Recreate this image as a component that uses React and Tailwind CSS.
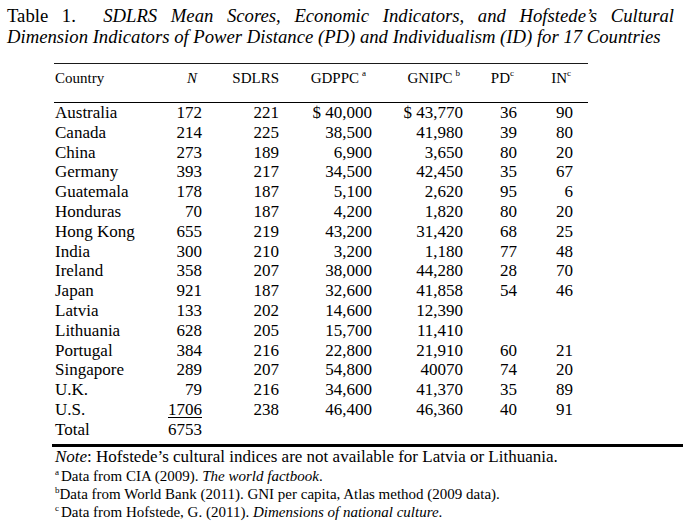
import React from "react";

const rows = [
  ["Australia", "172", "221", "$ 40,000", "$ 43,770", "36", "90"],
  ["Canada", "214", "225", "38,500", "41,980", "39", "80"],
  ["China", "273", "189", "6,900", "3,650", "80", "20"],
  ["Germany", "393", "217", "34,500", "42,450", "35", "67"],
  ["Guatemala", "178", "187", "5,100", "2,620", "95", "6"],
  ["Honduras", "70", "187", "4,200", "1,820", "80", "20"],
  ["Hong Kong", "655", "219", "43,200", "31,420", "68", "25"],
  ["India", "300", "210", "3,200", "1,180", "77", "48"],
  ["Ireland", "358", "207", "38,000", "44,280", "28", "70"],
  ["Japan", "921", "187", "32,600", "41,858", "54", "46"],
  ["Latvia", "133", "202", "14,600", "12,390", "", ""],
  ["Lithuania", "628", "205", "15,700", "11,410", "", ""],
  ["Portugal", "384", "216", "22,800", "21,910", "60", "21"],
  ["Singapore", "289", "207", "54,800", "40070", "74", "20"],
  ["U.K.", "79", "216", "34,600", "41,370", "35", "89"],
  ["U.S.", "1706", "238", "46,400", "46,360", "40", "91"],
  ["Total", "6753", "", "", "", "", ""],
];

const grid = "grid grid-cols-[95px_52px_77px_93px_91px_54px_56px]";

export default function App() {
  return (
    <div className="w-[683px] h-[523px] bg-white text-black overflow-hidden font-['Liberation_Serif','Times_New_Roman',serif]">
      <div className="pl-[7px] pr-[9px] pt-[5px] text-[18.7px] leading-[21px]">
        <div className="text-justify [text-align-last:justify] whitespace-nowrap">
          Table 1.&nbsp;{" "}
          <i>SDLRS Mean Scores, Economic Indicators, and Hofstede’s Cultural</i>
        </div>
        <div className="whitespace-nowrap">
          <i>Dimension Indicators of Power Distance (PD) and Individualism (ID) for 17 Countries</i>
        </div>
      </div>

      <div className="ml-[54px] w-[534px]">
        <div className="h-[17px] border-b border-solid border-[#1a1a1a]" />
        <div className={`${grid} h-[26px] leading-[26px] text-[15px] pl-[1px] mt-[1px]`}>
          <div>Country</div>
          <div className="text-right pr-[5px] italic">N</div>
          <div className="text-right">SDLRS</div>
          <div className="text-right pr-[6px]">
            GDPPC<sup className="text-[9px] ml-[3px] -top-[7px]">a</sup>
          </div>
          <div className="text-right pr-[3px]">
            GNIPC<sup className="text-[9px] ml-[3px] -top-[7px]">b</sup>
          </div>
          <div className="text-right pr-[3px]">
            PD<sup className="text-[9px] -top-[7px]">c</sup>
          </div>
          <div className="text-right pr-[2px]">
            IN<sup className="text-[9px] -top-[7px]">c</sup>
          </div>
        </div>
        <div className="h-[11px]" />
        <div className="h-[1px] w-[534px] bg-black" />
        <div className="text-[17px] pl-[1px]">
          {rows.map((r) => (
            <div key={r[0]} className={`${grid} h-[19.8px] leading-[19.8px]`}>
              <div className="whitespace-nowrap">{r[0]}</div>
              <div className="text-right">
                {r[0] === "U.S." ? (
                  <span className="underline underline-offset-[2px]">{r[1]}</span>
                ) : (
                  r[1]
                )}
              </div>
              <div className="text-right">{r[2]}</div>
              <div className="text-right">{r[3]}</div>
              <div className="text-right">{r[4]}</div>
              <div className="text-right">{r[5]}</div>
              <div className="text-right">{r[6]}</div>
            </div>
          ))}
        </div>
      </div>

      <div className="ml-[52px] mt-[4px] h-[3px] bg-black" />

      <div className="pl-[55px]">
        <div className="text-[17px] leading-[20px]">
          <i>Note</i>: Hofstede’s cultural indices are not available for Latvia or Lithuania.
        </div>
        <div className="text-[15px] leading-[18px]">
          <div>
            <sup className="text-[9px] mr-[2px] -top-[6px]">a</sup>Data from CIA (2009). <i>The world factbook</i>.
          </div>
          <div>
            <sup className="text-[9px] -top-[6px]">b</sup>Data from World Bank (2011). GNI per capita, Atlas method (2009 data).
          </div>
          <div>
            <sup className="text-[9px] mr-[2px] -top-[6px]">c</sup>Data from Hofstede, G. (2011). <i>Dimensions of national culture</i>.
          </div>
        </div>
      </div>
    </div>
  );
}
